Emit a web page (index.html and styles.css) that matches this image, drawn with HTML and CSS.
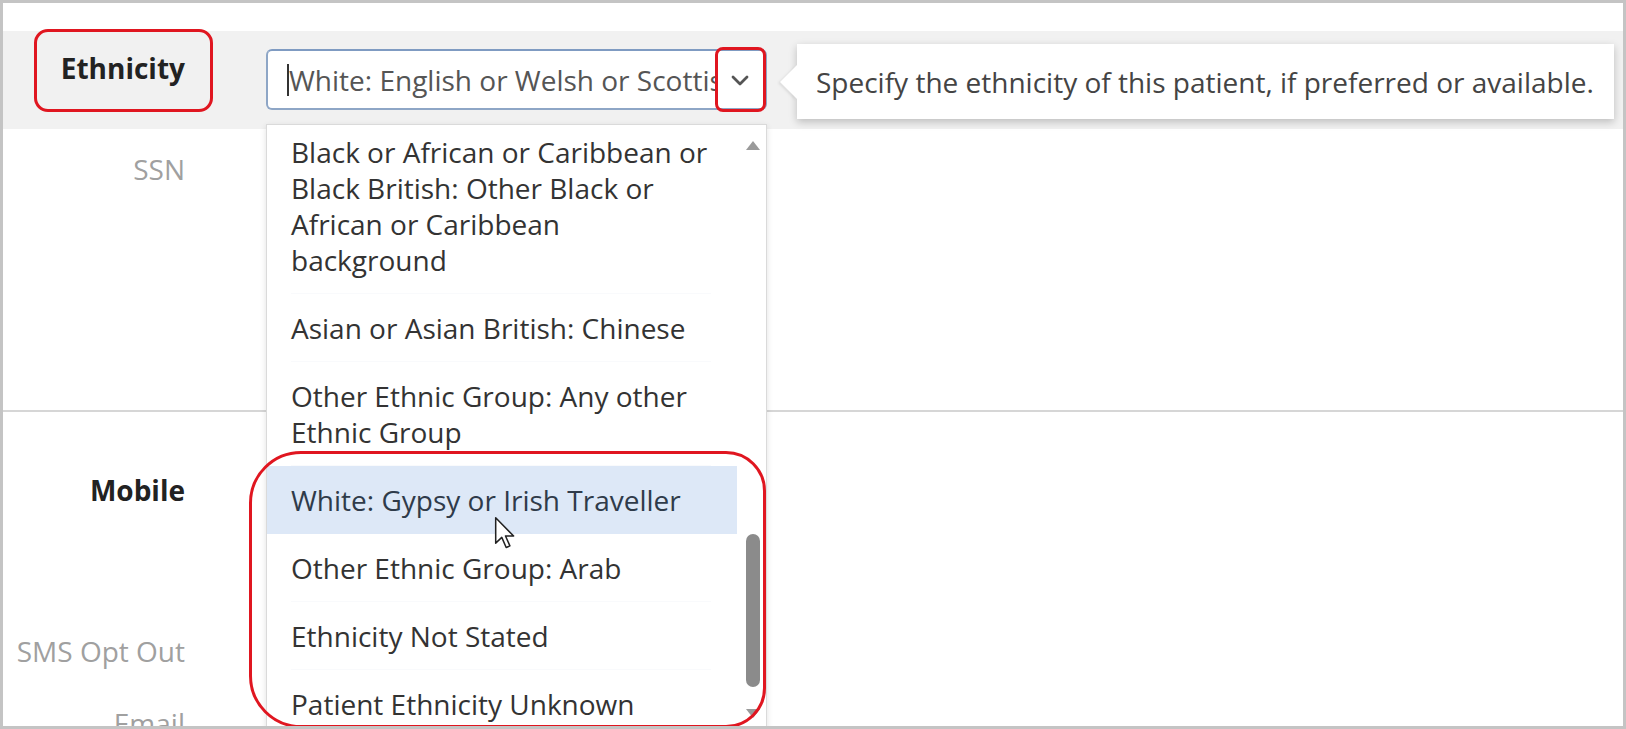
FILE: index.html
```html
<!DOCTYPE html>
<html lang="en">
<head>
<meta charset="utf-8">
<title>Patient form - Ethnicity</title>
<link rel="stylesheet" href="styles.css">
</head>
<body>
<div class="frame">
  <div class="form">
    <div class="row row-band">
      <div class="label label-strong">Ethnicity</div>
      <div class="field">
        <div class="select-input">
          <span class="caret"></span>
          <span class="select-value">White: English or Welsh or Scottish</span>
          <svg class="chevron" width="18" height="11" viewBox="0 0 18 11"><path d="M2 2 L9 9 L16 2" fill="none" stroke="#555" stroke-width="2.8" stroke-linecap="round" stroke-linejoin="round"/></svg>
        </div>
      </div>
    </div>
    <div class="row row-ssn">
      <div class="label label-muted">SSN</div>
    </div>
    <div class="row row-mobile">
      <div class="label label-strong">Mobile</div>
    </div>
    <div class="row row-sms">
      <div class="label label-muted">SMS Opt Out</div>
    </div>
    <div class="row row-email">
      <div class="label label-muted">Email</div>
    </div>
  </div>

  <div class="tooltip">
    <span class="tooltip-arrow"></span>
    <span class="tooltip-text">Specify the ethnicity of this patient, if preferred or available.</span>
  </div>

  <div class="dropdown">
    <ul class="options">
      <li class="option">Black or African or Caribbean or Black British: Other Black or African or Caribbean<br>background</li>
      <li class="option">Asian or Asian British: Chinese</li>
      <li class="option">Other Ethnic Group: Any other Ethnic Group</li>
      <li class="option option-hover">White: Gypsy or Irish Traveller</li>
      <li class="option">Other Ethnic Group: Arab</li>
      <li class="option">Ethnicity Not Stated</li>
      <li class="option">Patient Ethnicity Unknown</li>
    </ul>
    <div class="scrollbar">
      <span class="arrow-up"></span>
      <span class="thumb"></span>
      <span class="arrow-down"></span>
    </div>
  </div>

  <svg class="pointer" width="22" height="34" viewBox="0 0 13 20"><path d="M1 1 L1 16 L4.6 12.6 L7.2 18.6 L9.4 17.6 L6.8 11.8 L11.6 11.8 Z" fill="#fff" stroke="#222" stroke-width="0.9" stroke-linejoin="round"/></svg>

  <div class="mark mark-label"></div>
  <div class="mark mark-chevron"></div>
  <div class="mark mark-options"></div>
</div>
</body>
</html>
```

FILE: styles.css
```css
* { box-sizing: border-box; }

html, body {
  margin: 0;
  padding: 0;
  background: #ffffff;
}

body {
  font-family: "Open Sans", "Noto Sans", "Liberation Sans", sans-serif;
  font-size: 28px;
  color: #333;
}

.frame {
  position: relative;
  width: 1626px;
  height: 729px;
  border: 3px solid #c4c4c4;
  background: #fff;
  overflow: hidden;
}

.form {
  display: flex;
  flex-direction: column;
  padding-top: 28px;
}

.row {
  display: flex;
  align-items: flex-start;
}

.label {
  width: 182px;
  flex: none;
  text-align: right;
  line-height: 36px;
  white-space: nowrap;
}

.label-strong {
  font-weight: 700;
  color: #222;
}

.label-muted {
  color: #a0a0a0;
}

.row-band {
  height: 98px;
  background: #f1f1f1;
}

.row-band .label {
  padding-top: 19px;
  height: 74px;
}

.field {
  margin-left: 81px;
  padding-top: 18px;
}

.select-input {
  position: relative;
  display: flex;
  align-items: center;
  width: 501px;
  height: 61px;
  background: #fff;
  border: 2px solid #8ea6c6;
  border-top-color: #7f9bc2;
  border-radius: 6px;
  padding-left: 19px;
  padding-right: 50px;
  overflow: hidden;
}

.caret {
  flex: none;
  width: 2px;
  height: 32px;
  background: #333;
}

.select-value {
  color: #555;
  white-space: nowrap;
  overflow: hidden;
  line-height: 36px;
}

.chevron {
  position: absolute;
  right: 16px;
  top: 24px;
}

.row-ssn {
  height: 283px;
  border-bottom: 2px solid #d6d6d6;
}

.row-ssn .label {
  padding-top: 22px;
}

.row-mobile {
  height: 158px;
}

.row-mobile .label {
  padding-top: 60px;
}

.row-sms {
  height: 117px;
}

.row-sms .label {
  padding-top: 63px;
}

.row-email .label {
  padding-top: 18px;
}

/* tooltip */
.tooltip {
  position: absolute;
  left: 794px;
  top: 41px;
  width: 817px;
  height: 75px;
  background: #fff;
  box-shadow: 0 3px 8px rgba(0, 0, 0, 0.22);
  display: flex;
  align-items: center;
  padding-left: 19px;
}

.tooltip-arrow {
  position: absolute;
  left: -17px;
  top: 21px;
  width: 0;
  height: 0;
  border-top: 17px solid transparent;
  border-bottom: 17px solid transparent;
  border-right: 17px solid #fff;
  filter: drop-shadow(-2px 1px 1px rgba(0, 0, 0, 0.08));
}

.tooltip-text {
  color: #444;
  white-space: nowrap;
  line-height: 36px;
}

/* dropdown list */
.dropdown {
  position: absolute;
  left: 263px;
  top: 121px;
  width: 501px;
  height: 610px;
  background: #fff;
  border: 1px solid #dadada;
  box-shadow: 0 2px 6px rgba(0, 0, 0, 0.12);
  overflow: hidden;
}

.options {
  list-style: none;
  margin: -7px 0 0 0;
  padding: 0;
  width: 470px;
}

.option {
  position: relative;
  padding: 16px 12px 16px 24px;
  line-height: 36px;
  color: #333;
}

.option::after {
  content: "";
  position: absolute;
  left: 24px;
  right: 26px;
  bottom: 0;
  height: 1px;
  background: #f9fafc;
}

.option-hover {
  background: #dde8f7;
  color: #2f3b4a;
}

.option-hover::after {
  display: none;
}

.scrollbar {
  position: absolute;
  top: 0;
  right: 0;
  width: 27px;
  height: 100%;
}

.arrow-up {
  position: absolute;
  left: 7px;
  top: 16px;
  width: 0;
  height: 0;
  border-left: 7px solid transparent;
  border-right: 7px solid transparent;
  border-bottom: 9px solid #9a9a9a;
}

.thumb {
  position: absolute;
  left: 7px;
  top: 409px;
  width: 14px;
  height: 153px;
  background: #8b8b8b;
  border-radius: 7px;
}

.arrow-down {
  position: absolute;
  left: 7px;
  top: 584px;
  width: 0;
  height: 0;
  border-left: 7px solid transparent;
  border-right: 7px solid transparent;
  border-top: 9px solid #9a9a9a;
}

.pointer {
  position: absolute;
  left: 491px;
  top: 513px;
}

/* red annotation marks */
.mark {
  position: absolute;
  border: 3px solid #e01620;
}

.mark-label {
  left: 31px;
  top: 26px;
  width: 179px;
  height: 83px;
  border-radius: 14px;
}

.mark-chevron {
  left: 712px;
  top: 44px;
  width: 51px;
  height: 65px;
  border-radius: 8px;
}

.mark-options {
  left: 246px;
  top: 448px;
  width: 517px;
  height: 277px;
  border-radius: 52px 40px 40px 52px;
}
```
